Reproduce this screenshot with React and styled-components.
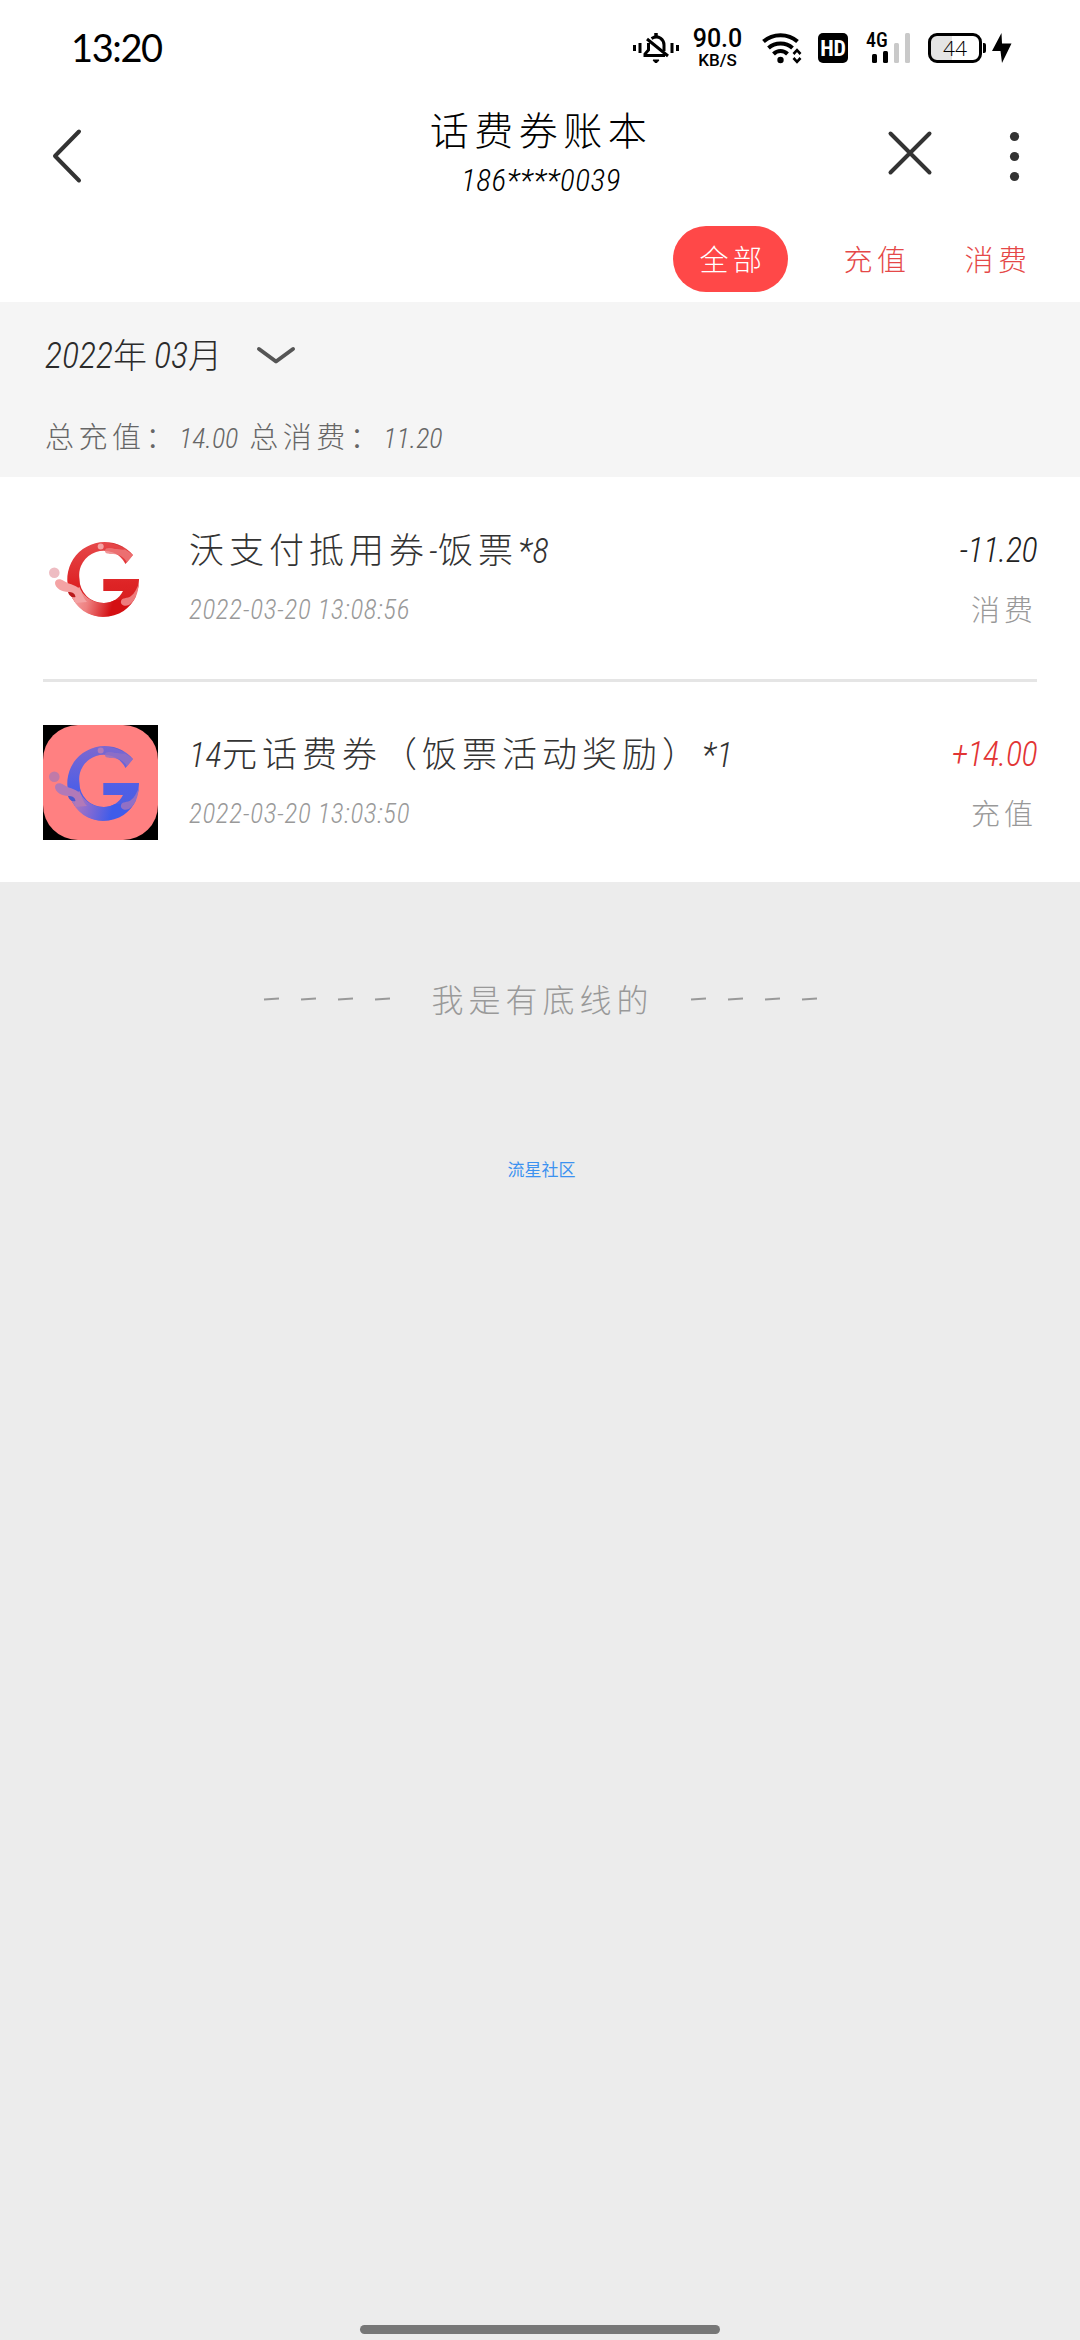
import React from "react";
import styled, { createGlobalStyle } from "styled-components";

const GlobalStyle = createGlobalStyle`
  * {
    box-sizing: border-box;
  }
  body {
    margin: 0;
    background: #ececec;
  }
`;

const Screen = styled.div`
  display: flex;
  flex-direction: column;
  width: 1080px;
  height: 2340px;
  overflow: hidden;
  background: #ececec;
  font-family: "Noto Sans CJK SC", sans-serif;
  font-weight: 300;
  white-space: nowrap;
`;

/* handwriting-like text: upright han, narrow slanted digits */
const Han = styled.span`
  display: block;
  font-size: ${(p) => p.$size}px;
  line-height: ${(p) => p.$line || 40}px;
  height: ${(p) => p.$line || 40}px;
  letter-spacing: ${(p) => p.$gap || 0}px;
  color: ${(p) => p.$color};
`;
const Num = styled.span`
  font-family: "Roboto Condensed", Roboto, sans-serif;
  font-style: italic;
  font-size: ${(p) => p.$size}px;
  letter-spacing: ${(p) => p.$gap}px;
`;

const Hand = ({ text, size, gap, numSize, numGap = 0, color, line }) => (
  <Han $size={size} $gap={gap} $color={color} $line={line}>
    {text.split(/([\x21-\x7e]+)/).map((part, i) =>
      i % 2 ? (
        <Num key={i} $size={numSize} $gap={numGap}>{part}</Num>
      ) : (
        part
      )
    )}
  </Han>
);

const StatusBar = styled.div`
  display: flex;
  align-items: center;
  justify-content: space-between;
  height: 96px;
  padding: 0 68px 0 71px;
  background: #fff;
`;
const Clock = styled.div`
  margin-top: -2px;
  font-family: Lato, sans-serif;
  font-weight: 400;
  font-size: 38px;
  letter-spacing: -1.4px;
`;
const StatusIcons = styled.div`
  display: flex;
  align-items: center;
`;
const Speed = styled.div`
  display: flex;
  flex-direction: column;
  align-items: center;
  gap: 5px;
  width: 51px;
  margin: 0 19px 0 13px;
  font-family: Roboto, sans-serif;
  font-weight: 500;
`;
const SpeedValue = styled.div`
  font-size: 25px;
  line-height: 18px;
`;
const SpeedUnit = styled.div`
  font-size: 17px;
  line-height: 14px;
`;
const HdBadge = styled.div`
  width: 30px;
  height: 30px;
  margin: 0 18px 0 16px;
  border-radius: 5px;
  background: #000;
  color: #fff;
  font-family: "Roboto Condensed", Roboto, sans-serif;
  font-weight: 700;
  font-size: 22px;
  line-height: 31px;
  letter-spacing: -0.2px;
  text-align: center;
`;
const Signal = styled.div`
  position: relative;
  width: 44px;
  height: 30px;
  margin-right: 18px;
`;
const SignalLabel = styled.div`
  position: absolute;
  left: 0;
  top: -1px;
  font-family: "Roboto Condensed", Roboto, sans-serif;
  font-weight: 500;
  font-size: 20px;
  line-height: 17px;
`;
const Battery = styled.div`
  width: 54px;
  height: 30px;
  border: 3px solid #000;
  border-radius: 9px;
  background: linear-gradient(90deg, #e4e4e4 44%, #fff 44%);
  font-family: "Open Sans", sans-serif;
  font-weight: 300;
  font-size: 21px;
  line-height: 24px;
  text-align: center;
`;
const BatteryTip = styled.div`
  width: 3px;
  height: 10px;
  margin: 0 6px 0 1px;
  border-radius: 0 2px 2px 0;
  background: #000;
`;

const TitleBar = styled.div`
  display: grid;
  grid-template-columns: 300px 1fr 300px;
  height: 120px;
  background: #fff;
`;
const BackButton = styled.div`
  padding: 31px 0 0 50px;
`;
const Titles = styled.div`
  display: flex;
  flex-direction: column;
  align-items: center;
  padding: 6px 0 0 2px;
`;
const Actions = styled.div`
  display: flex;
  justify-content: space-between;
  padding: 34px 60px 0 107px;
`;

const Tabs = styled.div`
  display: flex;
  justify-content: flex-end;
  height: 86px;
  padding: 10px 24px 0 0;
  background: #fff;
`;
const Tab = styled.div`
  display: flex;
  align-items: center;
  justify-content: center;
  width: ${(p) => (p.$active ? 115 : 121)}px;
  height: 66px;
  padding: 0 0 3px 5px;
  margin-right: ${(p) => (p.$active ? 26 : 0)}px;
  border-radius: 33px;
  background: ${(p) => (p.$active ? "#ff4848" : "transparent")};
`;

const Month = styled.div`
  height: 175px;
  padding: 32px 0 0 45px;
  background: #f5f5f5;
`;
const MonthPicker = styled.div`
  display: flex;
  align-items: center;
  height: 40px;
  margin-bottom: 41px;
`;
const Chevron = styled.svg`
  margin: 3px 0 0 26px;
`;

const List = styled.div`
  padding: 0 43px;
  background: #fff;
`;
const Record = styled.div`
  display: flex;
  height: ${(p) => (p.$last ? 200 : 205)}px;
  padding-top: ${(p) => (p.$last ? 43 : 44)}px;
  border-bottom: ${(p) => (p.$last ? "none" : "3px solid #e5e5e5")};
`;
const Detail = styled.div`
  flex: 1;
  padding: 7px 0 0 31px;
`;
const Amount = styled.div`
  display: flex;
  flex-direction: column;
  align-items: flex-end;
  padding-top: 7px;
`;
const Line = styled.div`
  height: 40px;
  margin-bottom: 20px;
`;

const Bottom = styled.div`
  display: flex;
  justify-content: center;
  padding: 96px 0 0 1px;
`;
const Dashes = styled.div`
  display: flex;
  align-items: center;
  gap: 22px;
  margin: 2px ${(p) => (p.$after ? 0 : 41)}px 0 ${(p) => (p.$after ? 37 : 0)}px;
`;
const Dash = styled.i`
  width: 15px;
  height: 2px;
  background: #999;
  transform: rotate(-3deg);
`;
const Community = styled.div`
  margin-top: 139px;
  padding-left: 3px;
  text-align: center;
  color: #3c92f0;
  font-size: 17px;
  line-height: 24px;
  font-weight: 400;
`;
const HomeBar = styled.div`
  width: 360px;
  height: 9px;
  margin: auto auto 6px;
  border-radius: 5px;
  background: #777;
`;

const BellOff = () => (
  <svg width="46" height="32" viewBox="0 0 46 32" fill="none" stroke="#000" strokeWidth="3">
    <path d="M1.5 13v6M7 11v10M39 11v10M44.500 13v6" />
    <path d="M23 1v4" strokeWidth="3.500" />
    <path d="M18.500 6.500C26 2 31 8 31 13v6" />
    <path d="M15.500 11v7l-3.500 4v1.500h20M14 7l21 17" />
    <path d="M20 28h6l-2 2.500h-2z" fill="#000" strokeWidth="1" />
  </svg>
);

const Wifi = () => (
  <svg width="40" height="31" viewBox="0 0 40 31" fill="none" stroke="#000" strokeWidth="4">
    <path d="M1.500 8.500C11 0 26 0 35.500 8.500M6.500 15C13 9 24 9 30.500 15M11.500 21c4-4 10-4 14 0" />
    <circle cx="18.500" cy="27" r="3.200" fill="#000" stroke="none" />
    <path d="M31.500 21l3.500-3.800 3.500 3.800M31.500 25l3.500 3.800 3.500-3.800" strokeWidth="2.600" />
  </svg>
);

const SignalBars = () => (
  <svg width="44" height="30" viewBox="0 0 44 30">
    <rect x="6" y="21" width="5" height="9" rx="1.500" />
    <rect x="17" y="18" width="5" height="12" rx="1.500" />
    <rect x="28" y="10" width="5" height="20" rx="1.500" fill="#c9c9c9" />
    <rect x="39" y="0" width="5" height="30" rx="1.500" fill="#c9c9c9" />
  </svg>
);

const Bolt = () => (
  <svg width="20" height="30" viewBox="0 0 20 30">
    <path d="M9.500 0L0 18h8.500L10 30l9.500-19.500H10z" />
  </svg>
);

const palettes = {
  red: {
    base: ["#e6484a", "#de2426", "#ee8080", "#d40f12", "#d3191b"],
    splash: "#f4a3a4",
    light: "#ee7c7d",
    dot: "#eebcc2",
    dark: "#b91a1c",
  },
  blue: {
    base: ["#7d68cf", "#4f5fe6", "#8a6cd0", "#3f5cea", "#4b60dd"],
    splash: "#b279b8",
    light: "#9270c4",
    dot: "#c07aa8",
    dark: "#4a58cf",
  },
};

const Logo = ({ tone }) => {
  const c = palettes[tone];
  return (
    <svg width="115" height="115" viewBox="0 0 115 115">
      <defs>
        <linearGradient id={`${tone}-v`} x1="0" y1="0" x2="0" y2="1">
          <stop offset="0" stopColor={c.base[0]} />
          <stop offset="0.55" stopColor={c.base[1]} />
          <stop offset="1" stopColor={c.base[4]} />
        </linearGradient>
        <linearGradient id={`${tone}-h`} gradientUnits="userSpaceOnUse" x1="28" y1="80" x2="68" y2="90">
          <stop offset="0" stopColor={c.splash} />
          <stop offset="0.4" stopColor={c.base[2]} />
          <stop offset="1" stopColor={c.base[3]} />
        </linearGradient>
      </defs>
      {tone === "blue" && (
        <>
          <rect width="115" height="115" fill="#000" />
          <rect width="115" height="115" rx="35" fill="#ff8081" />
        </>
      )}
      <path
        d="M90 34A37.400 37.400 0 1 0 60 95.800A37 37 0 0 0 96 58H60.300V70H80C76 78 69 82 61 82A24 24 0 0 1 36.500 58A24.500 24.500 0 0 1 82.500 43Z"
        fill={`url(#${tone}-v)`}
      />
      <path
        d="M27 72C33 88 46 95.800 60 95.800C76 95.800 88 87 93 75C86 74 79 80 72 79C68 81 65 82 61 82C48 82 39 74 36.500 66Z"
        fill={`url(#${tone}-h)`}
      />
      <path d="M12 62C12 58 17 57 21 60C27 64 35 64 38 70C40 75 41 78 44 81L32 82C33 76 30 72 25 71C19 71 12 67 12 62Z" fill={c.splash} />
      <path d="M25 71C29 71 32 72 32.500 76C29 77 26 75 25 71Z" fill={c.dark} />
      <path d="M62 30C62 26 68 27 72 28C75 28 79 29 82 28.500C85 30 87 32 90 34L84 41.500C81 36 76 33 70 33C66 33 62 33 62 30Z" fill={c.light} opacity="0.8" />
      <path d="M66 22C74 23 78 26 82 27C78 24 72 22 66 22Z" fill={c.dark} opacity="0.5" />
      <path d="M96 62C95 73 92 80 86 84C82 86 77 84 78 80C79 76 84 78 88 75C92 72 94 67 96 62Z" fill={c.light} />
      <circle cx="57.700" cy="25.500" r="3" fill={c.splash} />
      <circle cx="11.300" cy="51.700" r="5.300" fill={c.dot} />
    </svg>
  );
};

const records = [
  {
    tone: "red",
    name: "沃支付抵用券-饭票*8",
    time: "2022-03-20 13:08:56",
    amount: "-11.20",
    kind: "消费",
    color: "#222",
  },
  {
    tone: "blue",
    name: "14元话费券（饭票活动奖励）*1",
    time: "2022-03-20 13:03:50",
    amount: "+14.00",
    kind: "充值",
    color: "#e23434",
  },
];

const DashGroup = ({ after }) => (
  <Dashes $after={after}>
    <Dash />
    <Dash />
    <Dash />
    <Dash />
  </Dashes>
);

const App = () => {
  return (
    <Screen>
      <GlobalStyle />
      <StatusBar>
        <Clock>13:20</Clock>
        <StatusIcons>
          <BellOff />
          <Speed>
            <SpeedValue>90.0</SpeedValue>
            <SpeedUnit>KB/S</SpeedUnit>
          </Speed>
          <Wifi />
          <HdBadge>HD</HdBadge>
          <Signal>
            <SignalLabel>4G</SignalLabel>
            <SignalBars />
          </Signal>
          <Battery>44</Battery>
          <BatteryTip />
          <Bolt />
        </StatusIcons>
      </StatusBar>

      <TitleBar>
        <BackButton>
          <svg width="32" height="58" viewBox="0 0 32 58" fill="none" stroke="#333" strokeWidth="4" strokeLinecap="round" strokeLinejoin="round">
            <path d="M29 4.500L5 29L29 53.500" />
          </svg>
        </BackButton>
        <Titles>
          <Hand text="话费券账本" size={39} gap={5.500} color="#000" line={52} />
          <Hand text="186****0039" size={30} numSize={31} numGap={0.6} color="#000" line={48} />
        </Titles>
        <Actions>
          <svg width="46" height="46" viewBox="0 0 46 46" stroke="#333" strokeWidth="4" strokeLinecap="round">
            <path d="M3.500 3.500L42.500 42.500M42.500 3.500L3.500 42.500" />
          </svg>
          <svg width="12" height="54" viewBox="0 0 12 54" fill="#333">
            <circle cx="6.500" cy="6.500" r="4.600" />
            <circle cx="6.500" cy="26.500" r="4.600" />
            <circle cx="6.500" cy="46.500" r="4.600" />
          </svg>
        </Actions>
      </TitleBar>

      <Tabs>
        <Tab $active>
          <Hand text="全部" size={29} gap={4.500} color="#fff" />
        </Tab>
        <Tab>
          <Hand text="充值" size={29} gap={4.500} color="#e54848" />
        </Tab>
        <Tab>
          <Hand text="消费" size={29} gap={4.500} color="#e54848" />
        </Tab>
      </Tabs>

      <Month>
        <MonthPicker>
          <Hand text="2022年03月" size={34} gap={7} numSize={36} color="#2b2b2b" />
          <Chevron width="42" height="20" viewBox="0 0 42 20" fill="none" stroke="#555" strokeWidth="4" strokeLinecap="round" strokeLinejoin="round">
            <path d="M4 3L21 15.500L38 3" />
          </Chevron>
        </MonthPicker>
        <Hand text="总充值：14.00 总消费：11.20" size={29} gap={4.500} numSize={28} color="#666" />
      </Month>

      <List>
        {records.map((r, i) => (
          <Record key={r.time} $last={i === records.length - 1}>
            <Logo tone={r.tone} />
            <Detail>
              <Line>
                <Hand text={r.name} size={35} gap={5} numSize={34} numGap={0.500} color="#333" />
              </Line>
              <Hand text={r.time} size={27} numSize={27} numGap={0.700} color="#999" />
            </Detail>
            <Amount>
              <Line>
                <Hand text={r.amount} size={34} numSize={34} numGap={-0.500} color={r.color} />
              </Line>
              <Hand text={r.kind} size={29} gap={4} color="#999" />
            </Amount>
          </Record>
        ))}
      </List>

      <Bottom>
        <DashGroup />
        <Hand text="我是有底线的" size={32} gap={5} color="#999" />
        <DashGroup after />
      </Bottom>
      <Community>流星社区</Community>
      <HomeBar />
    </Screen>
  );
};

export default App;
